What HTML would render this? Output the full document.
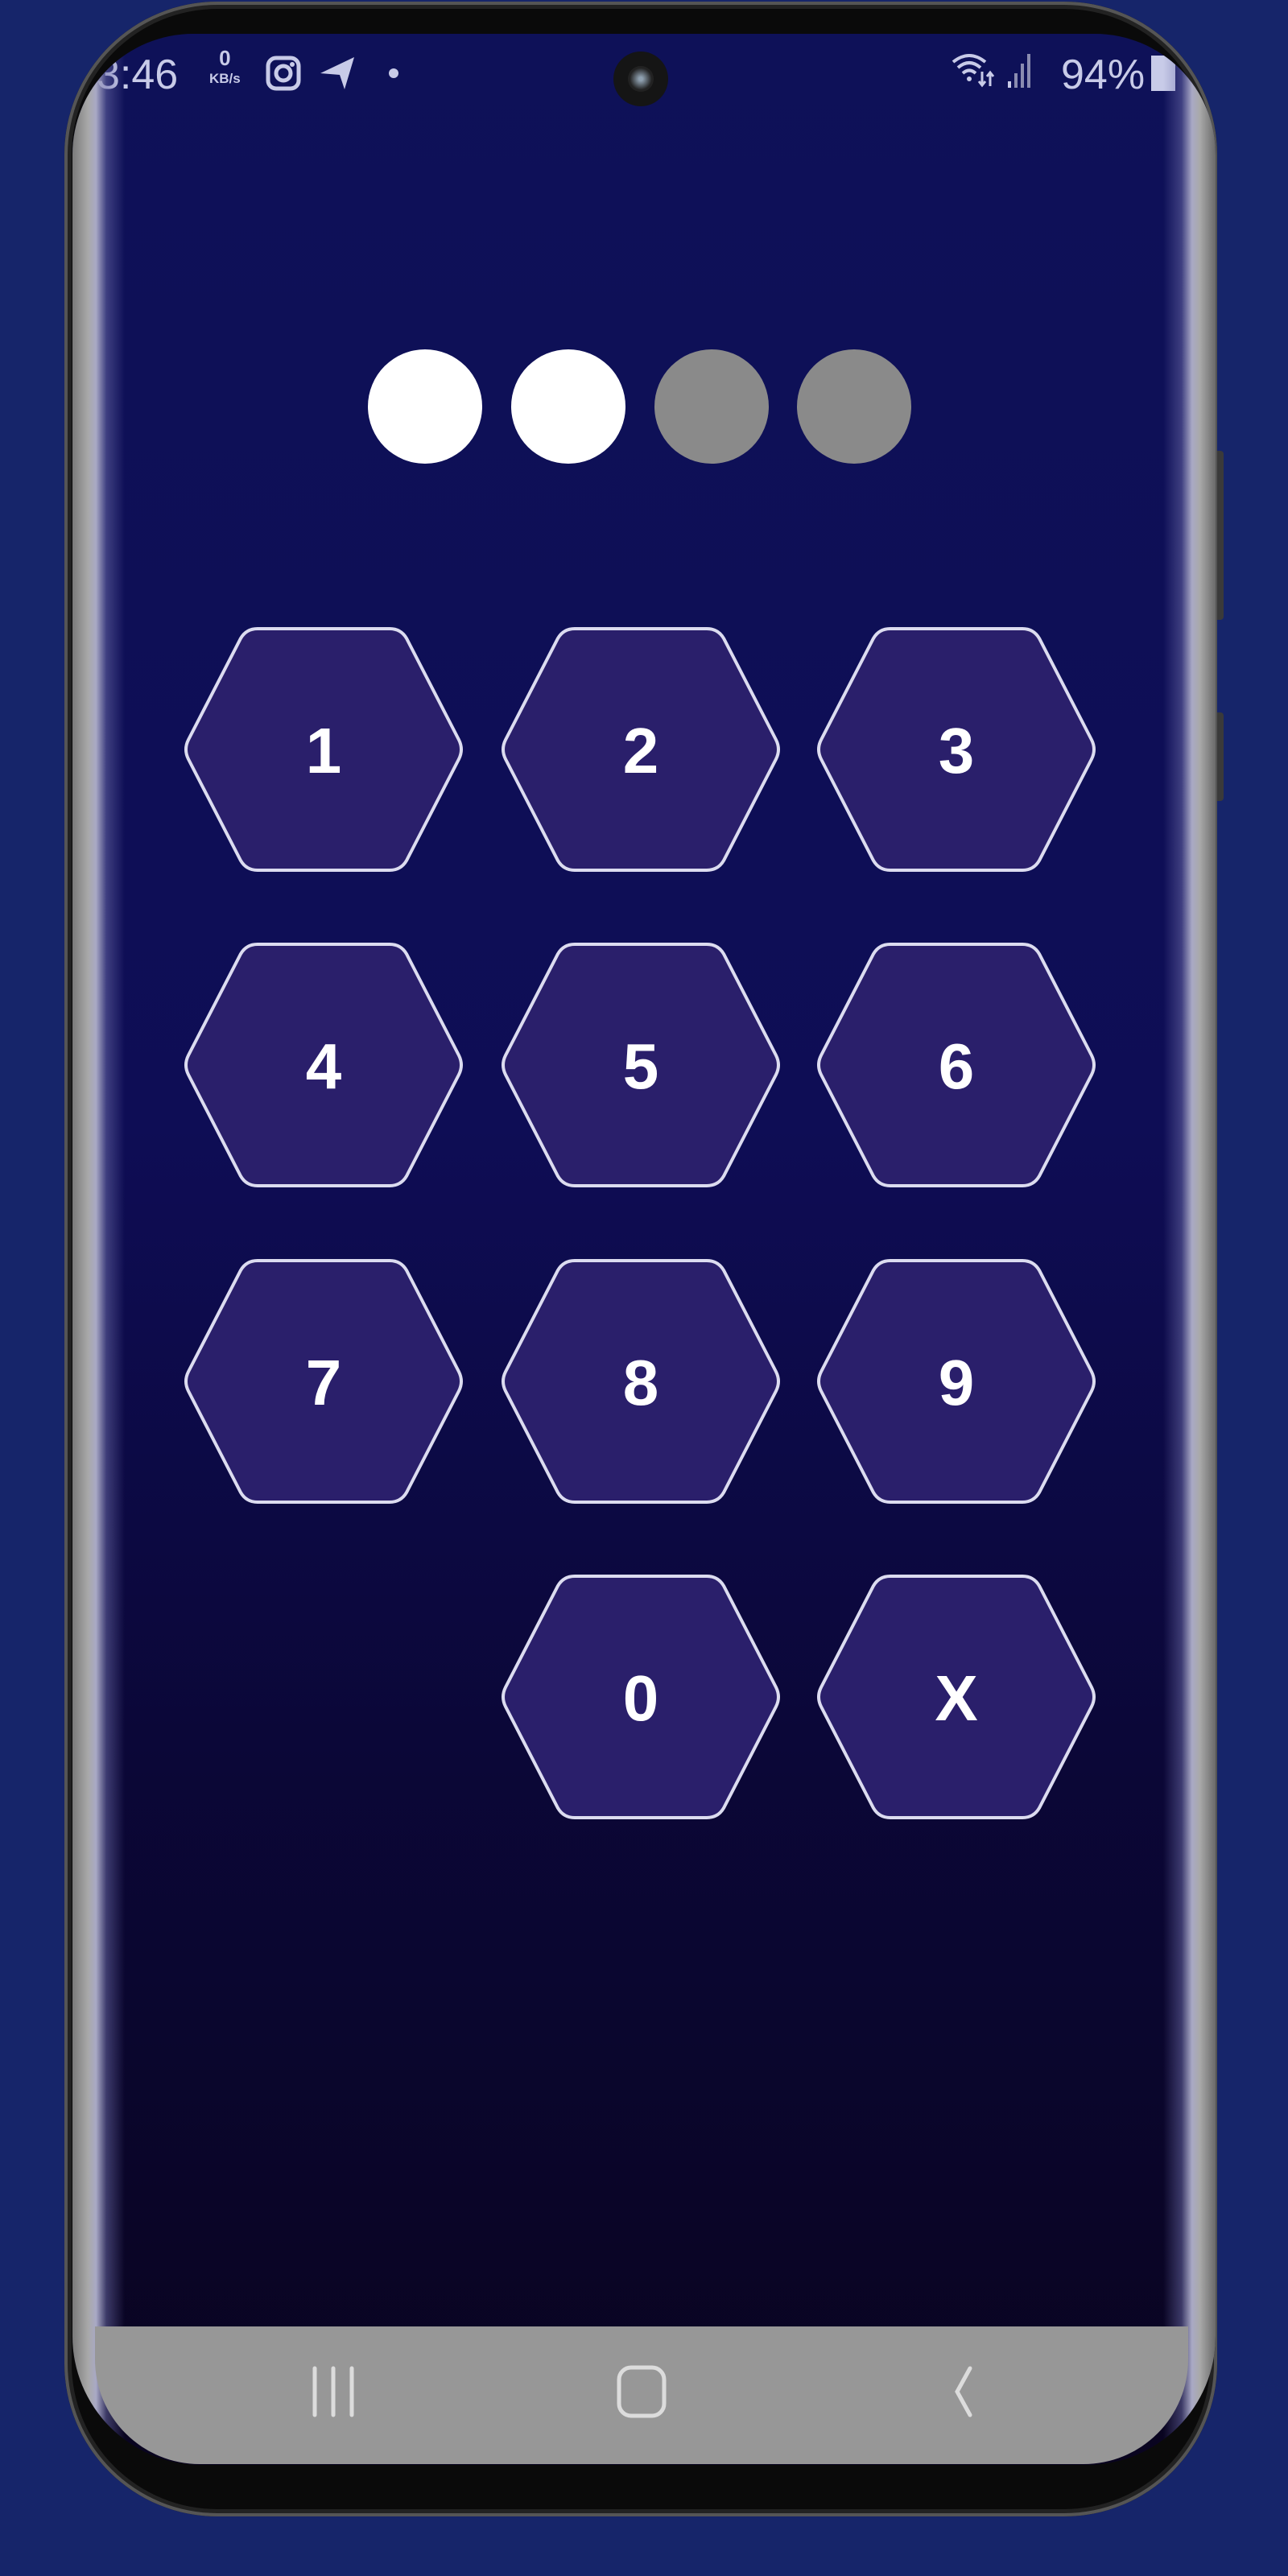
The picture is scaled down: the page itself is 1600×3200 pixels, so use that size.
<!DOCTYPE html><html><head><style>
body{margin:0;width:1600px;height:3200px;background:#16256a;position:relative;overflow:hidden;font-family:"Liberation Sans",sans-serif}
.phone{position:absolute;left:80px;top:2px;width:1432px;height:3124px;border-radius:190px;background:#0a0a0a;box-shadow:inset 0 0 0 4px #555,inset 0 0 0 9px #222}
.screen{position:absolute;left:90px;top:42px;width:1420px;height:3020px;border-radius:150px 150px 160px 160px;overflow:hidden;background:linear-gradient(#0e1158 0%,#0e0d55 45%,#0b0738 70%,#09041f 100%)}
.edgeL{position:absolute;left:0;top:0;bottom:0;width:65px;background:linear-gradient(90deg,#7a7a7a 0%,#a9a9a9 30%,#a9a9c5 45%,rgba(110,110,170,.5) 65%,rgba(14,13,85,0) 100%);z-index:2}
.edgeR{position:absolute;right:0;top:0;bottom:0;width:65px;background:linear-gradient(270deg,#6a6a6a 0%,#a9a9a9 30%,#a9a9c5 45%,rgba(110,110,170,.5) 65%,rgba(14,13,85,0) 100%);z-index:2}
.nav{position:absolute;left:28px;right:34px;top:2848px;height:171px;background:#979797;border-radius:0 0 130px 130px;z-index:3}
.st{position:absolute;top:21px;color:#c8cbe8;font-size:52px}
.dot{position:absolute;width:142px;height:142px;border-radius:50%;top:392px}
.btn{position:absolute;left:1512px;width:8px;background:#3a3a3a;border-radius:0 4px 4px 0}
</style></head><body>
<div class="btn" style="top:560px;height:210px"></div>
<div class="btn" style="top:885px;height:110px"></div>
<div class="phone"></div>
<div class="screen">
<div class="edgeL"></div><div class="edgeR"></div>
<div class="st" style="left:30px">3:46</div>
<div style="position:absolute;left:170px;top:19px;color:#c8cbe8;font-size:26px;font-weight:bold;text-align:center;line-height:22px">0<br><span style="font-size:17px">KB/s</span></div>
<svg style="position:absolute;left:240px;top:27px" width="44" height="44" viewBox="0 0 44 44"><rect x="3" y="3" width="38" height="38" rx="10" fill="none" stroke="#c8cbe8" stroke-width="5"/><circle cx="22" cy="22" r="9" fill="none" stroke="#c8cbe8" stroke-width="5"/><circle cx="33" cy="11" r="3" fill="#c8cbe8"/></svg>
<svg style="position:absolute;left:306px;top:27px" width="46" height="44" viewBox="0 0 46 44"><path d="M2 22 L44 2 L32 42 L26 24 Z" fill="#c8cbe8"/></svg>
<div style="position:absolute;left:393px;top:43px;width:12px;height:12px;border-radius:50%;background:#c8cbe8"></div>
<div style="position:absolute;left:672px;top:22px;width:68px;height:68px;border-radius:50%;background:#151515"><div style="margin:18px;width:32px;height:32px;border-radius:50%;background:radial-gradient(#8fa0b0 10%,#222 60%)"></div></div>
<svg style="position:absolute;left:1090px;top:21px" width="60" height="50" viewBox="0 0 60 50"><path d="M4 14 Q24 -2 44 14 M10 21 Q24 9 38 21 M16 28 Q24 21 32 28" fill="none" stroke="#c8cbe8" stroke-width="4"/><circle cx="24" cy="35" r="3" fill="#c8cbe8"/><path d="M40 26v16 M36 38l4 5 4-5 M50 44V28 M46 32l4-5 4 5" stroke="#c8cbe8" stroke-width="3" fill="none"/></svg>
<svg style="position:absolute;left:1160px;top:23px" width="30" height="44"><rect x="2" y="36" width="4" height="8" fill="#c8cbe8"/><rect x="10" y="26" width="4" height="18" fill="#8a8cb0"/><rect x="18" y="14" width="4" height="30" fill="#8a8cb0"/><rect x="26" y="2" width="4" height="42" fill="#8a8cb0"/></svg>
<div class="st" style="left:1228px">94%</div>
<div style="position:absolute;left:1340px;top:27px;width:30px;height:44px;background:#c8cbe8"></div>
<div class="dot" style="left:367px;background:#fff"></div>
<div class="dot" style="left:545px;background:#fff"></div>
<div class="dot" style="left:723px;background:#8a8a8a"></div>
<div class="dot" style="left:900px;background:#8a8a8a"></div>
<svg style="position:absolute;left:0;top:0" width="1420" height="2400" viewBox="0 0 1420 2400">
<defs><g id="h"><path d="M-82 -150 L82 -150 Q96 -150 103 -138 L168 -12 Q174 0 168 12 L103 138 Q96 150 82 150 L-82 150 Q-96 150 -103 138 L-168 12 Q-174 0 -168 -12 L-103 -138 Q-96 -150 -82 -150 Z" fill="#2a1f6b" stroke="#dcdcf0" stroke-width="4"/></g></defs>
<g font-family="Liberation Sans" font-weight="bold" font-size="80" fill="#fff" text-anchor="middle">
<use href="#h" x="312" y="889"/><text x="312" y="918">1</text>
<use href="#h" x="706" y="889"/><text x="706" y="918">2</text>
<use href="#h" x="1098" y="889"/><text x="1098" y="918">3</text>
<use href="#h" x="312" y="1281"/><text x="312" y="1310">4</text>
<use href="#h" x="706" y="1281"/><text x="706" y="1310">5</text>
<use href="#h" x="1098" y="1281"/><text x="1098" y="1310">6</text>
<use href="#h" x="312" y="1674"/><text x="312" y="1703">7</text>
<use href="#h" x="706" y="1674"/><text x="706" y="1703">8</text>
<use href="#h" x="1098" y="1674"/><text x="1098" y="1703">9</text>
<use href="#h" x="706" y="2066"/><text x="706" y="2095">0</text>
<use href="#h" x="1098" y="2066"/><text x="1098" y="2095">X</text>
</g></svg>
<div class="nav">
<svg style="position:absolute;left:0;top:0" width="1358" height="171"><g stroke="#dcdcdc" stroke-width="5" stroke-linecap="round" fill="none"><path d="M273 52v58 M296 52v58 M319 52v58"/><rect x="651" y="51" width="56" height="60" rx="15"/><path d="M1087 52 L1071 81 L1087 110"/></g></svg>
</div>
</div>
</body></html>
